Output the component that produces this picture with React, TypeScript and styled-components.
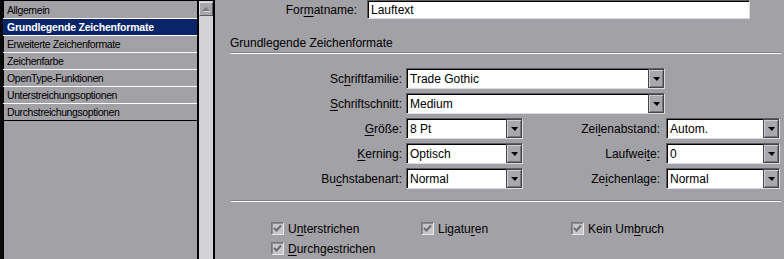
import styled, { createGlobalStyle } from 'styled-components'

const Global = createGlobalStyle`
  html, body {
    margin: 0;
    padding: 0;
    background: #a2a1a6;
  }
`

const Window = styled.div`
  display: flex;
  width: 784px;
  height: 259px;
  overflow: hidden;
  background: #a2a1a6;
  font-family: "Liberation Sans", Arial, sans-serif;
  color: #000;
`

const Sidebar = styled.div`
  display: flex;
  flex-shrink: 0;
  width: 215px;
  height: 273px;
  border-top: 1px solid #000;
  box-sizing: border-box;
`

const List = styled.ul`
  flex: 1;
  margin: 0;
  padding: 1px 0 0;
  list-style: none;
  border-left: 3px solid #0a0a0a;
  box-shadow: inset 1px 0 0 #000;
`

const Item = styled.li<{ $selected?: boolean; $last?: boolean }>`
  height: 16px;
  line-height: 16px;
  padding-left: 4px;
  font-size: 10.5px;
  letter-spacing: ${p => (p.$selected ? '-0.2px' : '-0.4px')};
  font-weight: ${p => (p.$selected ? 'bold' : 'normal')};
  color: ${p => (p.$selected ? '#fff' : '#000')};
  background: ${p => (p.$selected ? '#0a246a' : 'transparent')};
  border-bottom: 1px solid ${p => (p.$last ? '#000' : '#fff')};
  white-space: nowrap;
`

const Scrollbar = styled.div`
  display: flex;
  flex-direction: column;
  width: 14px;
  border-left: 2px solid #000;
  border-right: 2px solid #000;
  background: #d2d1d5;
  padding-top: 1px;
`

const ScrollButton = styled.div<{ $down?: boolean }>`
  display: flex;
  align-items: center;
  justify-content: center;
  height: 14px;
  box-sizing: border-box;
  background: #a7a6ab;
  border-top: 1px solid #e2e2e4;
  border-left: 1px solid #e2e2e4;
  border-right: 1px solid #5c5b60;
  border-bottom: 1px solid #5c5b60;
  margin-top: ${p => (p.$down ? 'auto' : '0')};
`

const Arrow = styled.span<{ $down?: boolean }>`
  width: 0;
  height: 0;
  border-left: 4px solid transparent;
  border-right: 4px solid transparent;
  ${p =>
    p.$down
      ? 'border-top: 4px solid #7a797e;'
      : 'border-bottom: 4px solid #7a797e;'}
  filter: drop-shadow(1px 1px 0 #d8d8da);
`

const Panel = styled.div`
  flex: 1;
  padding-left: 5px;
  font-size: 12px;
`

const NameRow = styled.div`
  display: flex;
  align-items: center;
  height: 19px;
`

const NameLabel = styled.label`
  width: 137px;
  margin-right: 10px;
  text-align: right;
`

const Field = styled.div<{ $width: number }>`
  display: flex;
  align-items: center;
  width: ${p => p.$width}px;
  height: 100%;
  box-sizing: border-box;
  background: #fff;
  border-top: 1px solid #5e5d62;
  border-left: 1px solid #5e5d62;
  border-right: 1px solid #dcdcde;
  border-bottom: 1px solid #dcdcde;
  box-shadow: inset 1px 1px 0 #000;
  padding-left: 3px;
  white-space: nowrap;
`

const DropButton = styled.span`
  display: flex;
  align-items: center;
  justify-content: center;
  margin-left: auto;
  width: 16px;
  height: 100%;
  box-sizing: border-box;
  background: #a9a8ad;
  border: 1px solid #46454a;
  box-shadow: inset 1px 1px 0 #cfcfd2, inset -1px -1px 0 #77767b;
`

const DropArrow = styled.span`
  width: 0;
  height: 0;
  margin-top: 1px;
  border-left: 4px solid transparent;
  border-right: 3px solid transparent;
  border-top: 4px solid #000;
`

const SectionTitle = styled.div`
  margin: 17px 0 0 10px;
  line-height: 14px;
`

const Groove = styled.div<{ $top: number; $left: number }>`
  margin: ${p => p.$top}px 3px 0 ${p => p.$left}px;
  border-top: 1px solid #807f84;
  border-bottom: 1px solid #fff;
`

const FormGrid = styled.div`
  display: grid;
  grid-template-columns: 186px 117px 143px 114px;
  grid-auto-rows: 21px;
  row-gap: 4px;
  margin-top: 14px;
`

const Label = styled.label<{ $pad?: number }>`
  display: flex;
  align-items: center;
  justify-content: flex-end;
  padding-right: ${p => p.$pad ?? 4}px;
`

const Wide = styled.div`
  grid-column: 2 / 4;
`

const Checks = styled.div`
  display: grid;
  grid-template-columns: 150px 150px 150px;
  grid-auto-rows: 20px;
  padding: 20px 0 0 51px;
`

const CheckRow = styled.label`
  display: flex;
  align-items: center;
  gap: 4px;
  height: 13px;
`

const Box = styled.span`
  display: flex;
  align-items: center;
  justify-content: center;
  width: 13px;
  height: 13px;
  box-sizing: border-box;
  background: #c6c5c9;
  border-top: 1px solid #77767b;
  border-left: 1px solid #77767b;
  border-right: 1px solid #e6e6e8;
  border-bottom: 1px solid #e6e6e8;
  box-shadow: inset 1px 1px 0 #8e8d92;
`

const Key = styled.u`
  text-underline-offset: 2px;
`

function Select({ width, value }: { width: number; value: string }) {
  return (
    <Field $width={width}>
      {value}
      <DropButton>
        <DropArrow />
      </DropButton>
    </Field>
  )
}

function Check({ children }: { children: React.ReactNode }) {
  return (
    <CheckRow>
      <Box>
        <svg width="9" height="9" viewBox="0 0 9 9">
          <polyline points="1,4 3.5,6.5 8,1.5" fill="none" stroke="#6d6c71" strokeWidth="2" />
        </svg>
      </Box>
      <span>{children}</span>
    </CheckRow>
  )
}

const items = [
  'Allgemein',
  'Grundlegende Zeichenformate',
  'Erweiterte Zeichenformate',
  'Zeichenfarbe',
  'OpenType-Funktionen',
  'Unterstreichungsoptionen',
  'Durchstreichungsoptionen',
]

export default function App() {
  return (
    <>
      <Global />
      <Window>
        <Sidebar>
          <List>
            {items.map((name, i) => (
              <Item key={name} $selected={i === 1} $last={i === items.length - 1}>
                {name}
              </Item>
            ))}
          </List>
          <Scrollbar>
            <ScrollButton>
              <Arrow />
            </ScrollButton>
            <ScrollButton $down>
              <Arrow $down />
            </ScrollButton>
          </Scrollbar>
        </Sidebar>

        <Panel>
          <NameRow>
            <NameLabel>
              For<Key>m</Key>atname:
            </NameLabel>
            <Field $width={383}>Lauftext</Field>
          </NameRow>

          <SectionTitle>Grundlegende Zeichenformate</SectionTitle>
          <Groove $top={2} $left={10} />

          <FormGrid>
            <Label>
              Sc<Key>h</Key>riftfamilie:
            </Label>
            <Wide>
              <Select width={259} value="Trade Gothic" />
            </Wide>
            <div />
            <Label>
              <Key>S</Key>chriftschnitt:
            </Label>
            <Wide>
              <Select width={259} value="Medium" />
            </Wide>
            <div />
            <Label>
              <Key>G</Key>röße:
            </Label>
            <Select width={117} value="8 Pt" />
            <Label $pad={6}>
              Zei<Key>l</Key>enabstand:
            </Label>
            <Select width={114} value="Autom." />
            <Label>
              <Key>K</Key>erning:
            </Label>
            <Select width={117} value="Optisch" />
            <Label $pad={6}>
              Laufwei<Key>t</Key>e:
            </Label>
            <Select width={114} value="0" />
            <Label>
              Bu<Key>c</Key>hstabenart:
            </Label>
            <Select width={117} value="Normal" />
            <Label $pad={6}>
              Ze<Key>i</Key>chenlage:
            </Label>
            <Select width={114} value="Normal" />
          </FormGrid>

          <Groove $top={11} $left={11} />

          <Checks>
            <Check>
              U<Key>n</Key>terstrichen
            </Check>
            <Check>
              Ligatu<Key>r</Key>en
            </Check>
            <Check>
              Kein Um<Key>b</Key>ruch
            </Check>
            <Check>
              <Key>D</Key>urchgestrichen
            </Check>
          </Checks>
        </Panel>
      </Window>
    </>
  )
}
